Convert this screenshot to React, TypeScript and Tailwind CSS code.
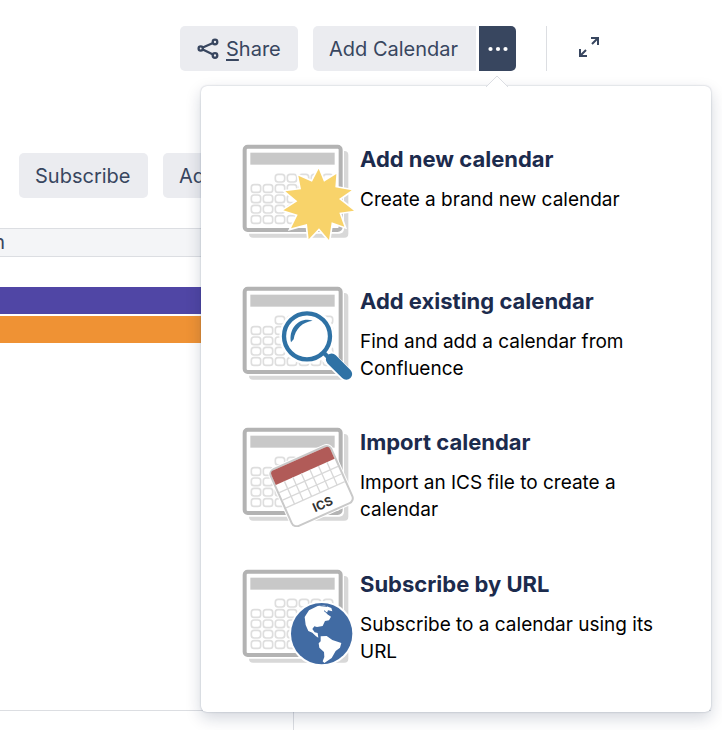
import type { ReactNode } from "react";

function CalendarArt({ children }: { children: ReactNode }) {
  const cells: ReactNode[] = [];
  for (let r = 0; r < 5; r++) {
    for (let c = r === 0 ? 2 : 0; c < 7; c++) {
      cells.push(
        <rect key={`${r}-${c}`} x={49 + c * 36} y={118 + r * 31} width="28" height="23" rx="8" fill="none" stroke="#dedede" strokeWidth="5" />,
      );
    }
  }
  return (
    <svg className="h-[104px] w-[120px] shrink-0" viewBox="15 15 360 312" aria-hidden="true">
      <rect x="42" y="48" width="298" height="260" rx="12" fill="#d8d8d8" />
      <rect x="20" y="26" width="307" height="270" rx="14" fill="#fff" />
      <rect x="29" y="35" width="288" height="250" rx="9" fill="#fff" stroke="#b3b3b3" strokeWidth="12" />
      <rect x="46" y="53" width="253" height="36" fill="#c8c8c8" />
      {cells}
      {children}
    </svg>
  );
}

function Star() {
  return (
    <path
      d="M251 101L267 140L304 117L301 157L350 166L312 192L357 227L313 233L328 275L290 262L282 315L252 280L221 313L216 267L168 280L188 239L145 226L187 199L151 169L198 163L190 122L231 140Z"
      fill="#f8d36a"
      stroke="#fff"
      strokeWidth="10"
      paintOrder="stroke"
    />
  );
}

function Magnifier() {
  return (
    <g>
      <path d="M277 238L333 292" stroke="#fff" strokeWidth="42" strokeLinecap="round" />
      <circle cx="216" cy="178" r="83" fill="#fff" />
      <circle cx="216" cy="178" r="69" fill="#fff" stroke="#2f72a5" strokeWidth="13" />
      <path d="M168 196C160 154 193 119 233 131C204 134 180 156 176 187Z" fill="#2f72a5" />
      <path d="M264 225L282 243" stroke="#2f72a5" strokeWidth="13" />
      <path d="M290 247L334 291" stroke="#2f72a5" strokeWidth="35" strokeLinecap="round" />
    </g>
  );
}

function IcsSheet() {
  return (
    <g transform="translate(101 160) rotate(-24)">
      <rect x="0" y="0" width="199" height="186" rx="16" fill="#fff" stroke="#fff" strokeWidth="12" />
      <rect x="0" y="0" width="199" height="186" rx="16" fill="#fff" stroke="#c9c9c9" strokeWidth="6" />
      <path d="M3 46V14Q3 3 14 3H185Q196 3 196 14V46Z" fill="#b15b58" />
      <path d="M3 71H196M3 96H196M3 121H196M31 46V121M59 46V121M87 46V121M115 46V121M143 46V121M171 46V121" stroke="#d8d8d8" strokeWidth="4" />
      <text x="77" y="169" className="font-['Inter',sans-serif] text-[37px] font-bold" fill="#333">ICS</text>
    </g>
  );
}

function Globe() {
  return (
    <g>
      <circle cx="260" cy="221" r="98" fill="#fff" />
      <circle cx="260" cy="221" r="92" fill="#416ba3" />
      <path d="M209 171L222 151L248 138L267 136L289 144L292 154L279 151L275 161L288 170L282 181L270 183L263 198L246 201L238 199L232 207L239 217L248 219L250 233L243 229L232 218L220 213L212 195Z" fill="#fff" />
      <path d="M257 229L275 228L292 240L319 249L315 263L302 273L290 294L268 309L263 304L268 291L267 276L253 263L251 250L257 244Z" fill="#fff" />
      <path d="M256 137L276 139M267 152L281 163" stroke="#416ba3" strokeWidth="3" />
    </g>
  );
}

const options = [
  { title: "Add new calendar", text: "Create a brand new calendar", art: <Star /> },
  { title: "Add existing calendar", text: "Find and add a calendar from Confluence", art: <Magnifier /> },
  { title: "Import calendar", text: "Import an ICS file to create a calendar", art: <IcsSheet /> },
  { title: "Subscribe by URL", text: "Subscribe to a calendar using its URL", art: <Globe /> },
];

const buttonStyle = "flex h-[45px] shrink-0 items-center bg-[#ebecf0] px-4 whitespace-nowrap";

function AddMenu() {
  return (
    <div className="absolute top-full right-[11px] z-10 mt-[15px] w-[510px] rounded-md bg-white pt-[54px] pb-[6px] shadow-[0_0_2px_rgba(9,30,66,0.28),0_6px_16px_rgba(9,30,66,0.18)]">
      <svg className="absolute -top-[11px] right-[202px] h-3 w-6" viewBox="0 0 24 12" aria-hidden="true">
        <path d="M1 12L12 1L23 12" fill="#fff" stroke="#dcdee3" />
      </svg>
      <ul className="grid h-[566px] grid-rows-4">
        {options.map((option) => (
          <li key={option.title}>
            <button type="button" className="flex w-full items-start pr-12 pl-[39px] text-left">
              <CalendarArt>{option.art}</CalendarArt>
              <span className="flex flex-col gap-3 pt-1">
                <span className="text-[22px] leading-[30px] font-bold text-[#1c2b4d]">{option.title}</span>
                <span className="text-[19px] leading-[27px] text-black">{option.text}</span>
              </span>
            </button>
          </li>
        ))}
      </ul>
    </div>
  );
}

export default function App() {
  return (
    <div className="flex min-h-screen flex-col overflow-hidden bg-white font-['Inter',sans-serif] text-[20px] text-[#38465f]">
      <header className="relative flex items-center justify-end pt-[26px] pr-[122px]">
        <button type="button" className={`${buttonStyle} mr-[15px] w-[118px] gap-[6px] rounded-[5px]`}>
          <svg className="h-6 w-6 shrink-0" viewBox="0 0 24 24" fill="none" stroke="currentColor" strokeWidth="2.3" aria-hidden="true">
            <circle cx="4.7" cy="11.5" r="2.1" />
            <circle cx="19" cy="5" r="2.3" />
            <circle cx="19" cy="18.5" r="2.3" />
            <path d="M6.8 10.5L17 6M6.8 12.5L17 17.5" />
          </svg>
          <span><u className="underline-offset-3">S</u>hare</span>
        </button>
        <button type="button" className={`${buttonStyle} mr-[3px] w-[163px] rounded-l-[5px]`}>Add Calendar</button>
        <button type="button" aria-label="More calendar options" aria-expanded="true" className="flex h-[45px] w-[37px] items-center justify-center rounded-r-[5px] bg-[#38465f]">
          <svg className="h-5 w-5" viewBox="0 0 20 20" fill="#fff" aria-hidden="true">
            <circle cx="2.5" cy="10" r="2.1" />
            <circle cx="10" cy="10" r="2.1" />
            <circle cx="17.5" cy="10" r="2.1" />
          </svg>
        </button>
        <div className="ml-[30px] h-[45px] w-px bg-[#dcdee2]" />
        <button type="button" aria-label="Expand" className="ml-[30px] -mr-[1px] flex h-[45px] items-center pb-1">
          <svg className="h-6 w-6" viewBox="0 0 24 24" fill="none" stroke="currentColor" strokeWidth="2" aria-hidden="true">
            <path d="M14 3H21V10M21 3L15 9M3 14V21H10M3 21L9 15" />
          </svg>
        </button>
        <AddMenu />
      </header>
      <main className="flex flex-1 flex-col pt-[82px] pr-[11px]">
        <div className="flex gap-[15px] pl-[19px]">
          <button type="button" className={`${buttonStyle} w-[129px] rounded-[5px]`}>Subscribe</button>
          <button type="button" className={`${buttonStyle} rounded-[5px]`}>Add Event</button>
        </div>
        <div className="mt-[30px] border-y border-[#dcdee2] bg-[#f4f5f7]">
          <div className="flex w-[5px] justify-end overflow-hidden leading-[27px]">Sun</div>
        </div>
        <div className="mt-[30px] h-[27px] bg-[#5046a5]" />
        <div className="mt-[2px] h-[27px] bg-[#ef9234]" />
        <div className="flex-1 border-b border-[#dcdee2]" />
        <div className="h-[19px] w-[294px] border-r border-[#dcdee2]" />
      </main>
    </div>
  );
}
